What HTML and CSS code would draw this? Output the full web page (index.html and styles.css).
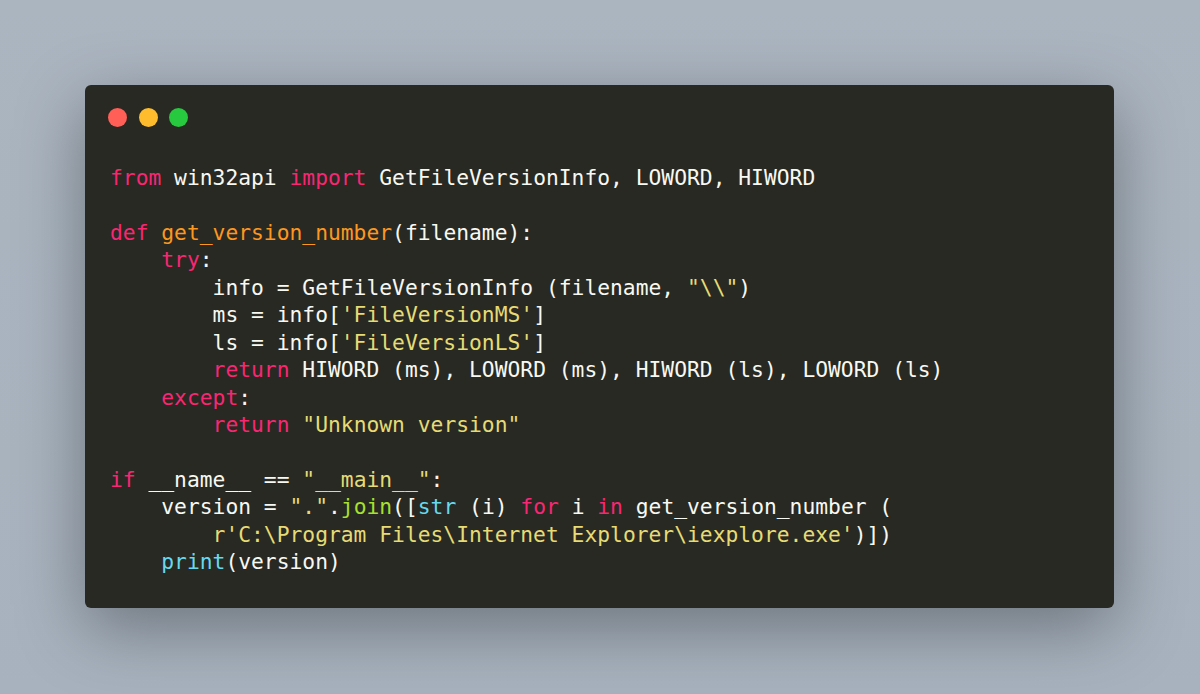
FILE: index.html
```html
<!DOCTYPE html>
<html>
<head>
<meta charset="utf-8">
<link rel="stylesheet" href="styles.css">
</head>
<body>
<div class="stage">
  <div class="window">
    <div class="titlebar">
      <span class="dot red"></span>
      <span class="dot yellow"></span>
      <span class="dot green"></span>
    </div>
<pre class="code"><span class="k">from</span> win32api <span class="k">import</span> GetFileVersionInfo, LOWORD, HIWORD

<span class="k">def</span> <span class="f">get_version_number</span>(filename):
    <span class="k">try</span>:
        info = GetFileVersionInfo (filename, <span class="s">"\\"</span>)
        ms = info[<span class="s">'FileVersionMS'</span>]
        ls = info[<span class="s">'FileVersionLS'</span>]
        <span class="k">return</span> HIWORD (ms), LOWORD (ms), HIWORD (ls), LOWORD (ls)
    <span class="k">except</span>:
        <span class="k">return</span> <span class="s">"Unknown version"</span>

<span class="k">if</span> __name__ == <span class="s">"__main__"</span>:
    version = <span class="s">"."</span>.<span class="g">join</span>([<span class="c">str</span> (i) <span class="k">for</span> i <span class="k">in</span> get_version_number (
        <span class="s">r'C:\Program Files\Internet Explorer\iexplore.exe'</span>)])
    <span class="c">print</span>(version)</pre>
  </div>
</div>
</body>
</html>
```

FILE: styles.css
```css
html, body {
  margin: 0;
  padding: 0;
}
body {
  width: 1200px;
  height: 694px;
  background: linear-gradient(180deg, #abb5c0 0%, #a7b2be 100%);
  overflow: hidden;
}
.stage {
  padding: 85px 86px 0 85px;
}
.window {
  width: 1029px;
  height: 523px;
  box-sizing: border-box;
  background: #282923;
  border-radius: 6px;
  box-shadow: 0 20px 68px rgba(0, 0, 0, 0.35);
  padding: 23px 0 0 0;
}
.titlebar {
  display: flex;
  gap: 11.5px;
  padding-left: 23px;
  height: 19px;
}
.dot {
  width: 19px;
  height: 19px;
  border-radius: 50%;
  display: block;
}
.red { background: #ff5f56; }
.yellow { background: #ffbd2e; }
.green { background: #27c93f; }
.code {
  margin: 37px 0 0 25px;
  font-family: "DejaVu Sans Mono", monospace;
  font-size: 21.3px;
  line-height: 27.43px;
  color: #f8f8f2;
}
.k { color: #f92672; }
.f { color: #fd971f; }
.s { color: #e6db74; }
.c { color: #66d9ef; }
.g { color: #a6e22e; }
```
